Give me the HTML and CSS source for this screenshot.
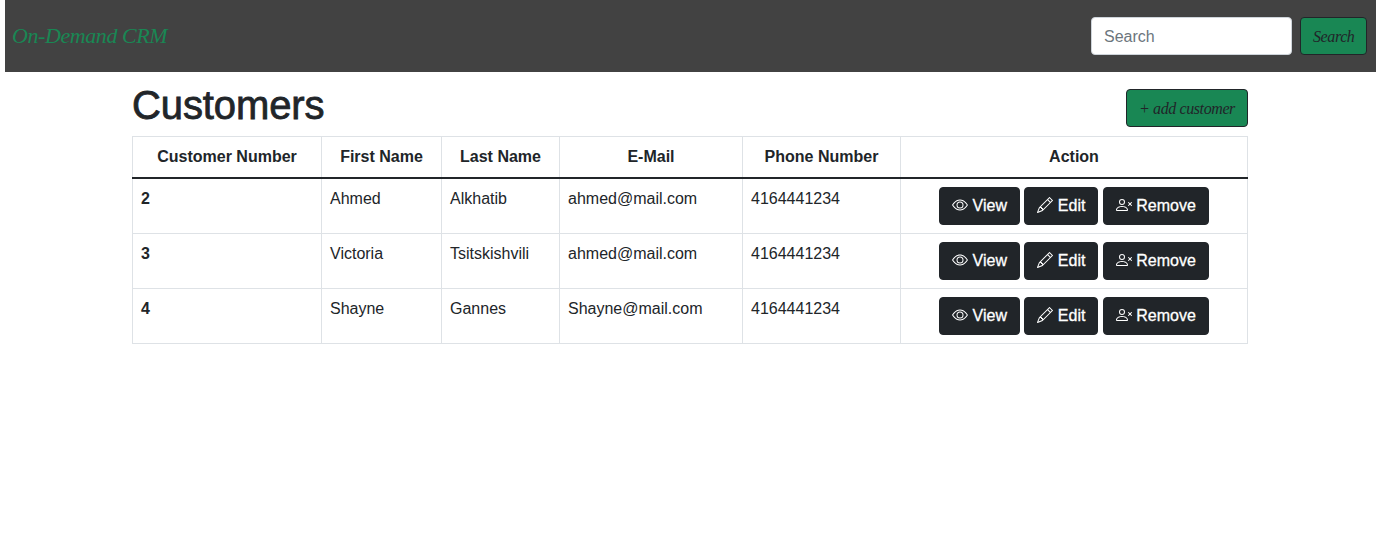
FILE: index.html
```html
<!DOCTYPE html>
<html lang="en">
<head>
<meta charset="utf-8">
<title>On-Demand CRM</title>
<link rel="stylesheet" href="styles.css">
</head>
<body>
<svg class="sprite" aria-hidden="true">
  <symbol id="eye" viewBox="0 0 16 16"><path d="M16 8s-3-5.5-8-5.5S0 8 0 8s3 5.5 8 5.5S16 8 16 8zM1.173 8a13.133 13.133 0 0 1 1.66-2.043C4.12 4.668 5.88 3.5 8 3.5c2.12 0 3.879 1.168 5.168 2.457A13.133 13.133 0 0 1 14.828 8c-.058.087-.122.183-.195.288-.335.48-.83 1.12-1.465 1.755C11.879 11.332 10.119 12.5 8 12.5c-2.12 0-3.879-1.168-5.168-2.457A13.134 13.134 0 0 1 1.172 8z"/><path d="M8 5.5a2.5 2.5 0 1 0 0 5 2.5 2.5 0 0 0 0-5zM4.5 8a3.5 3.5 0 1 1 7 0 3.5 3.5 0 0 1-7 0z"/></symbol>
  <symbol id="pencil" viewBox="0 0 16 16"><path d="M12.146.146a.5.5 0 0 1 .708 0l3 3a.5.5 0 0 1 0 .708l-10 10a.5.5 0 0 1-.168.11l-5 2a.5.5 0 0 1-.65-.65l2-5a.5.5 0 0 1 .11-.168l10-10zM11.207 2.5 13.5 4.793 14.793 3.5 12.5 1.207 11.207 2.5zm1.586 3L10.5 3.207 4 9.707V10h.5a.5.5 0 0 1 .5.5v.5h.5a.5.5 0 0 1 .5.5v.5h.293l6.5-6.5zm-9.761 5.175-.106.106-1.528 3.821 3.821-1.528.106-.106A.5.5 0 0 1 5 12.5V12h-.5a.5.5 0 0 1-.5-.5V11h-.5a.5.5 0 0 1-.468-.325z"/></symbol>
  <symbol id="person-x" viewBox="0 0 16 16"><path d="M8 5a2 2 0 1 1-4 0 2 2 0 0 1 4 0zM6 8a3 3 0 1 0 0-6 3 3 0 0 0 0 6zm6 5c0 1-1 1-1 1H1s-1 0-1-1 1-4 6-4 6 3 6 4zm-1-.004c-.001-.246-.154-.986-.832-1.664C9.516 10.68 8.289 10 6 10c-2.29 0-3.516.68-4.168 1.332-.678.678-.83 1.418-.832 1.664h10zm1.146-7.85a.5.5 0 0 1 .708 0L14 6.293l1.146-1.147a.5.5 0 0 1 .708.708L14.707 7l1.147 1.146a.5.5 0 0 1-.708.708L14 7.707l-1.146 1.147a.5.5 0 0 1-.708-.708L13.293 7l-1.147-1.146a.5.5 0 0 1 0-.708z"/></symbol>
</svg>
<nav class="navbar">
  <a class="brand">On-Demand CRM</a>
  <form class="search">
    <input class="search-input" type="search" placeholder="Search">
    <button class="btn btn-green btn-search" type="button"><span class="script">Search</span></button>
  </form>
</nav>
<main class="container">
  <header class="page-head">
    <h1 class="title">Customers</h1>
    <button class="btn btn-green btn-add" type="button"><span class="script">+ add customer</span></button>
  </header>
  <table class="table">
    <colgroup><col class="c-num"><col class="c-first"><col class="c-last"><col class="c-mail"><col class="c-phone"><col class="c-action"></colgroup>
    <thead>
      <tr><th>Customer Number</th><th>First Name</th><th>Last Name</th><th>E-Mail</th><th>Phone Number</th><th>Action</th></tr>
    </thead>
    <tbody>
      <tr><th>2</th><td>Ahmed</td><td>Alkhatib</td><td>ahmed@mail.com</td><td>4164441234</td>
        <td class="actions">
          <button class="btn btn-dark"><svg class="icon"><use href="#eye"/></svg> View</button>
          <button class="btn btn-dark"><svg class="icon"><use href="#pencil"/></svg> Edit</button>
          <button class="btn btn-dark"><svg class="icon"><use href="#person-x"/></svg> Remove</button>
        </td></tr>
      <tr><th>3</th><td>Victoria</td><td>Tsitskishvili</td><td>ahmed@mail.com</td><td>4164441234</td>
        <td class="actions">
          <button class="btn btn-dark"><svg class="icon"><use href="#eye"/></svg> View</button>
          <button class="btn btn-dark"><svg class="icon"><use href="#pencil"/></svg> Edit</button>
          <button class="btn btn-dark"><svg class="icon"><use href="#person-x"/></svg> Remove</button>
        </td></tr>
      <tr><th>4</th><td>Shayne</td><td>Gannes</td><td>Shayne@mail.com</td><td>4164441234</td>
        <td class="actions">
          <button class="btn btn-dark"><svg class="icon"><use href="#eye"/></svg> View</button>
          <button class="btn btn-dark"><svg class="icon"><use href="#pencil"/></svg> Edit</button>
          <button class="btn btn-dark"><svg class="icon"><use href="#person-x"/></svg> Remove</button>
        </td></tr>
    </tbody>
  </table>
</main>
</body>
</html>
```
FILE: styles.css
```css
*, *::before, *::after { box-sizing: border-box; }
body {
  margin: 0;
  background: #fff;
  color: #212529;
  font: 400 16px/24px "Liberation Sans", Arial, sans-serif;
}
.sprite { display: none; }
.navbar {
  display: flex;
  align-items: center;
  justify-content: space-between;
  height: 72px;
  margin-left: 5px;
  padding: 0 9px 0 7px;
  background: #424242;
}
.brand {
  padding-bottom: 1px;
  color: #198754;
  font: italic 400 22px/30px "Liberation Serif", serif;
  letter-spacing: -0.42px;
  white-space: nowrap;
}
.search { display: flex; gap: 8px; margin: 0; }
.search-input {
  width: 201px;
  height: 38px;
  padding: 7px 12px 5px;
  border: 1px solid #ced4da;
  border-radius: 4px;
  background: #fff;
  font: inherit;
  appearance: none;
}
.search-input::placeholder { color: #6c757d; opacity: 1; }
.btn {
  height: 38px;
  padding: 6px 12px;
  border: 1px solid #212529;
  border-radius: 4px;
  font: inherit;
  text-align: center;
  vertical-align: middle;
  white-space: nowrap;
}
.btn-green { padding: 7px 12px 5px; background: #198754; color: #212529; }
.btn-search { width: 67px; }
.btn-add { width: 122px; }
.script {
  font: italic 400 16px/24px "Liberation Serif", serif;
  letter-spacing: -0.4px;
}
.btn-dark {
  background: #212529;
  color: #fff;
  -webkit-text-stroke: 0.3px #fff;
}
.icon {
  width: 16px;
  height: 16px;
  fill: currentColor;
  stroke: none;
  vertical-align: -2px;
}
.container { width: 1116px; margin-left: 132px; padding-top: 9px; }
.page-head {
  display: flex;
  align-items: flex-start;
  justify-content: space-between;
  height: 55px;
}
.title {
  margin: 0;
  font-size: 40px;
  font-weight: 400;
  line-height: 48px;
  letter-spacing: -0.1px;
  -webkit-text-stroke: 0.8px #212529;
}
.btn-add { margin-top: 8px; }
.table {
  width: 1116px;
  table-layout: fixed;
  border-collapse: collapse;
}
.c-num { width: 189px; }
.c-first { width: 120px; }
.c-last { width: 118px; }
.c-mail { width: 183px; }
.c-phone { width: 158px; }
.c-action { width: 347px; }
.table th, .table td {
  padding: 8px;
  border: 1px solid #dee2e6;
  text-align: left;
  vertical-align: top;
}
.table thead th { text-align: center; border-bottom: 2px solid #212529; }
.table td.actions { text-align: center; font-size: 16px; line-height: 0; }
.actions .btn { line-height: 24px; }
```
